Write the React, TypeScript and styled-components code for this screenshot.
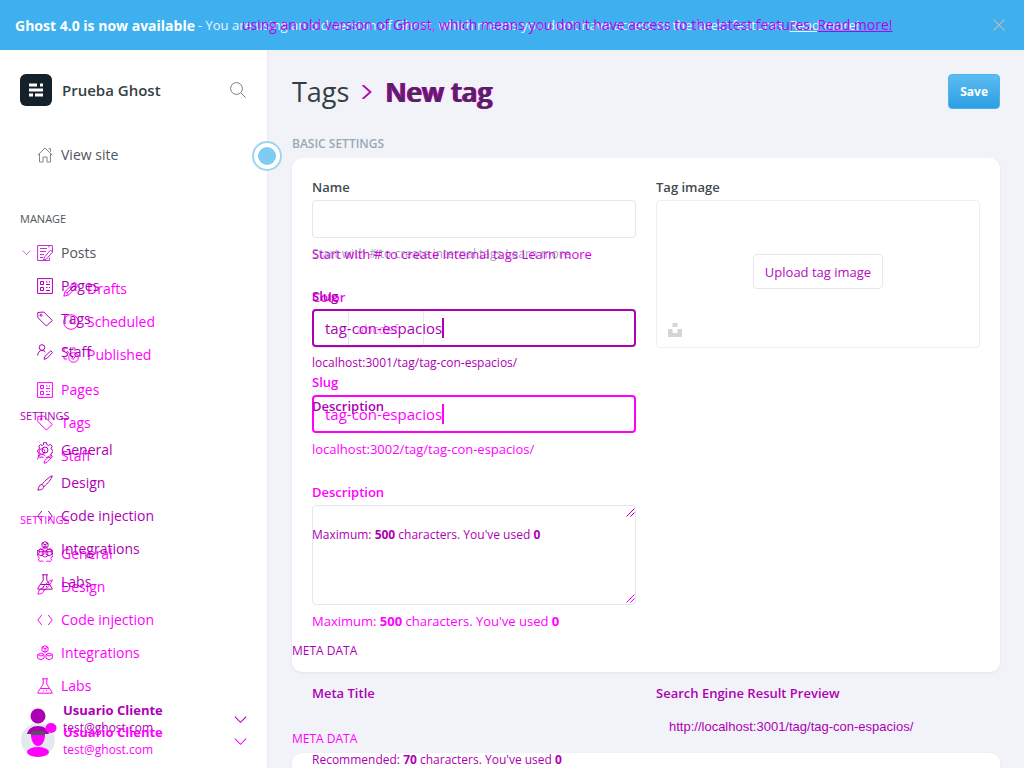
import React from "react";
import styled, { createGlobalStyle, css } from "styled-components";

const ADDED = "#ff00ff";
const REMOVED = "#ad00b4";

const GlobalStyle = createGlobalStyle`
  *, *::before, *::after { box-sizing: border-box; }
  html, body { margin: 0; height: 100%; overflow: hidden; }
  body { font-family: "Open Sans", "Noto Sans", sans-serif; font-size: 14px; color: #4f565d; background: #f2f3f8; }
  button, input, textarea { font: inherit; color: inherit; }
  h1, h2, h3, p, ul { margin: 0; padding: 0; font-weight: 400; }
  ul { list-style: none; }
  a { color: inherit; text-decoration: none; }
`;

const Page = styled.div`
  display: flex;
  flex-direction: column;
  height: 100vh;
`;

/* Two revisions of one region share a single grid cell. */
const Stack = styled.div`
  display: grid;
  grid-template-columns: minmax(0, 1fr);
  align-items: start;
  > * { grid-area: 1 / 1; }
`;

const Banner = styled.div`
  flex: none;
  display: flex;
  align-items: center;
  height: 50px;
  padding: 0 16px 0 15px;
  background: #3eb0ef;
  color: #fff;
  font-size: 13px;
  white-space: nowrap;
  strong { font-size: 14px; font-weight: 700; }
`;
const BannerTexts = styled(Stack)`
  flex: 1;
  align-items: center;
  margin-left: 3px;
`;
const Notice = styled.p<{ $added?: boolean }>`
  color: ${(p) => (p.$added ? "#b800f0" : "#e8f6fd")};
  font-size: ${(p) => (p.$added ? 14 : 13)}px;
  line-height: 18px;
  padding-left: ${(p) => (p.$added ? 44 : 0)}px;
  a { text-decoration: underline; }
`;
const CloseButton = styled.button`
  display: flex;
  padding: 0;
  border: 0;
  background: none;
  color: #c9b9b4;
`;

const Body = styled.div`
  flex: 1;
  min-height: 0;
  display: flex;
`;

const Sidebar = styled.aside`
  position: relative;
  flex: none;
  display: flex;
  flex-direction: column;
  width: 268px;
  background: #fff;
  border-right: 1px solid #e9edf1;
`;
const SiteHeader = styled.div`
  display: flex;
  align-items: center;
  gap: 10px;
  padding: 24px 21px 0 20px;
  color: #343f44;
  h2 { flex: 1; font-size: 15px; font-weight: 600; }
`;
const PlainButton = styled.button`
  display: flex;
  padding: 0;
  border: 0;
  background: none;
  color: #6a737b;
`;
const Nav = styled.nav`
  flex: 1;
  min-height: 0;
  padding-top: 32px;
`;
const Row = styled.a<{ $sub?: boolean }>`
  display: flex;
  align-items: center;
  gap: 8px;
  height: 33px;
  padding-left: ${(p) => (p.$sub ? 63 : 37)}px;
`;
const SiteRow = styled(Row)`
  svg { color: #7d868d; }
`;
const PostsRow = styled(Row)`
  gap: 0;
  padding-left: 22px;
  svg { color: #c42fd0; }
  svg:first-child { margin-right: 6px; }
  svg + svg { margin-right: 8px; }
`;
const NavHeading = styled.h3`
  margin: 39px 0 8px;
  padding-left: 20px;
  font-size: 11px;
  line-height: 18px;
  font-weight: 500;
`;
const SubList = styled.ul`
  padding: 3px 0 2px;
`;
const Revision = styled.div<{ $tone: string }>`
  color: ${(p) => p.$tone};
`;
const Toggle = styled.button`
  position: absolute;
  top: 91px;
  right: -15px;
  width: 30px;
  height: 30px;
  padding: 4px;
  border: 2px solid #9ed5f2;
  border-radius: 50%;
  background: #fff;
  &::before {
    content: "";
    display: block;
    width: 18px;
    height: 18px;
    border-radius: 50%;
    background: #80cbf1;
  }
`;
const Account = styled.footer`
  flex: none;
  display: grid;
  grid-template-columns: 36px minmax(0, 1fr);
  gap: 6px;
  padding: 0 20px 9px 21px;
`;
const User = styled.div<{ $tone: string; $lower?: boolean }>`
  display: flex;
  align-items: center;
  justify-content: space-between;
  color: ${(p) => p.$tone};
  ${(p) => p.$lower && css`padding-top: 22px;`}
  line-height: 18px;
  strong { display: block; font-size: 13px; font-weight: 700; }
  span { font-size: 12px; display: block; }
`;

const Main = styled.main`
  flex: 1;
  min-width: 0;
  padding: 24px 24px 0;
  overflow: hidden;
`;
const TitleBar = styled.header`
  display: flex;
  align-items: center;
  justify-content: space-between;
  height: 35px;
`;
const Title = styled.h1`
  display: flex;
  align-items: center;
  gap: 11px;
  font-size: 27px;
  line-height: 35px;
  font-weight: 500;
  color: #343f44;
`;
const TitleText = styled.span`
  font-weight: 600;
  color: #4a2a55;
  text-shadow: 1px 0 #d400dc, -1px 0 ${REMOVED};
`;
const SaveButton = styled.button`
  height: 35px;
  padding: 0 11px;
  border: 1px solid #4fb2ea;
  border-radius: 4px;
  background: linear-gradient(#5cbcf1, #2b9fe3);
  color: #fff;
  font-size: 12px;
  font-weight: 700;
`;
const SectionTitle = styled.h2<{ $tone?: string }>`
  font-size: 12px;
  line-height: 18px;
  font-weight: ${(p) => (p.$tone ? 400 : 600)};
  color: ${(p) => p.$tone || "#98a9b6"};
`;
const Revisions = styled(Stack)`
  padding-top: 26px;
`;
const Card = styled.section<{ $tall?: boolean }>`
  margin-top: 5px;
  padding: 20px;
  border-radius: 10px;
  background: #fff;
  box-shadow: 0 1px 3px rgba(40, 60, 90, 0.08);
  ${(p) => p.$tall && css`padding-bottom: 17px; margin-bottom: 58px;`}
`;
const Columns = styled.div`
  display: grid;
  grid-template-columns: minmax(0, 1fr) minmax(0, 1fr);
  gap: 20px;
`;
const Field = styled.div`
  display: flex;
  flex-direction: column;
  margin-bottom: 25px;
`;
const Label = styled.label<{ $tone?: string }>`
  margin-bottom: 4px;
  font-size: 13px;
  line-height: 18px;
  font-weight: 600;
  color: ${(p) => p.$tone || "#3f4a50"};
`;
const boxed = css`
  border: 1px solid #e3e8eb;
  border-radius: 4px;
  background: transparent;
  outline: 0;
`;
const TextInput = styled.input<{ $bare?: boolean }>`
  ${boxed}
  height: 38px;
  width: 100%;
  ${(p) => p.$bare && css`border-color: transparent;`}
`;
const FocusBox = styled.div<{ $tone: string }>`
  display: flex;
  align-items: center;
  height: 38px;
  padding-left: 11px;
  border: 2px solid ${(p) => p.$tone};
  border-radius: 4px;
  color: ${(p) => p.$tone};
  font-size: 15px;
  input {
    field-sizing: content;
    padding: 0;
    border: 0;
    outline: 0;
    background: none;
  }
  &::after {
    content: "";
    width: 2px;
    height: 20px;
    background: ${(p) => p.$tone};
  }
`;
const ColorBox = styled.div`
  display: flex;
  height: 38px;
  width: 112px;
  ${boxed}
  &::before {
    content: "";
    width: 36px;
    border-right: 1px solid #e3e8eb;
  }
  input {
    width: 70px;
    padding: 0 8px;
    border: 0;
    background: none;
    font-size: 13px;
  }
  input::placeholder { color: ${ADDED}; opacity: 0.5; }
`;
const Help = styled.p<{ $tone: string; $large?: boolean }>`
  margin-top: 7px;
  font-size: ${(p) => (p.$large ? 13 : 12)}px;
  line-height: 18px;
  color: ${(p) => p.$tone};
  white-space: nowrap;
  strong { font-weight: 700; }
`;
const AreaWrap = styled.div<{ $tone: string }>`
  position: relative;
  height: 100px;
  svg { position: absolute; right: 1px; bottom: 2px; color: ${(p) => p.$tone}; }
`;
const Area = styled.textarea<{ $bare?: boolean }>`
  ${boxed}
  display: block;
  width: 100%;
  height: 100px;
  resize: none;
  ${(p) => p.$bare && css`border-color: transparent;`}
`;
const Uploader = styled.div`
  ${boxed}
  display: flex;
  align-items: center;
  justify-content: center;
  position: relative;
  height: 148px;
  padding-bottom: 5px;
  border-color: #eceff1;
  > svg { position: absolute; left: 11px; bottom: 10px; }
`;
const UploadButton = styled.button`
  ${boxed}
  height: 35px;
  padding: 0 11px;
  color: #b40cbc;
  font-size: 13px;
`;
const RemovedForm = styled.div`
  padding: 152px 20px 0;
`;
const MetaHeading = styled.div`
  margin: 73px 0 24px -20px;
`;
const Snippet = styled.a`
  padding: 12px 0 0 13px;
  font-family: "Liberation Sans", Arial, sans-serif;
  font-size: 13px;
  line-height: 18px;
  color: ${REMOVED};
`;

const Svg = ({ size = 16, sw = 1, children }: { size?: number; sw?: number; children: React.ReactNode }) => (
  <svg width={size} height={size} viewBox="0 0 16 16" fill="none" stroke="currentColor" strokeWidth={sw} aria-hidden="true">
    {children}
  </svg>
);

const icons: Record<string, React.ReactNode> = {
  home: <path d="M.7 8.2 8 1l7.300 7.200M2.500 6.500v8.500h3.500v-5h4v5h3.500v-8.500M11.500 1.700h2v3" />,
  posts: <path d="M12 2.500v-2H.6v15h11.800v-3M3 3.500h7M3 6.500h6M3 9.500h4M3 12.500h3M12 .5h3.400v3M15.500 3v4l-6 7-3 1 1-3 6-7 2 2" />,
  pages: <path d="M.6.6h14.800v14.800H.6zM3.500 3.500h3v3h-3zM3.500 9.500h3v3h-3zM9 4h1.500M12 4h1M9 6.500h4M9 9.500h1.500M12 9.500h1M9 12.500h4" />,
  tag: <><path d="M.8 1.500v5l8.500 8.500 6-5.500-8.500-8.500z" /><circle cx="4" cy="4.200" r="1" /></>,
  staff: <><circle cx="5" cy="3.500" r="2.800" /><path d="M.6 11.500c.3-3.300 2-5 4.400-5 1.500 0 2.700.6 3.500 1.800M7 15.300l1-3 5.800-5.500 1.700 1.800-5.600 5.800z" /></>,
  gear: <><circle cx="8" cy="8" r="3" /><path d="m6.500.7 3 0 .5 2 1.500.7 1.900-1 1.700 2-1 1.800.6 1.500 1.300.6v2l-1.500.6-.6 1.500.7 1.700-1.700 1.600-1.800-.8-1.500.7-.6 1.700h-2l-.8-1.800-1.500-.6-2 .7-1.400-1.700.9-1.700-.6-1.400-.9-.6v-2l1.200-.7.7-1.500-.8-1.800 1.600-1.600 1.700.8 1.500-.7z" /></>,
  brush: <path d="M.7 15c1.300-1 .6-4.800 3.300-5.300 2.500-.3 3.400 2.300 1.800 4-1.200 1.200-3.300 1.300-5.100 1.300zM5 9.500C8 5.500 12 2 15.300.8c-.6 3-4.800 8-8.500 10.900" />,
  code: <path d="M4.800 3 .8 8l4 5M11.200 3l4 5-4 5" />,
  blocks: <path d="M8 .7l3 1.500v3.500L8 7.300 5 5.700V2.200zM5 2.200l3 1.500 3-1.500M8 3.700v3.600M4 8l3 1.500v3.700L4 14.900l-3.300-1.700V9.500zM.7 9.500 4 11l3-1.500M12 8l3.300 1.500v3.700L12 14.900l-3-1.700V9.500zM9 9.500l3 1.500 3.300-1.500" />,
  labs: <path d="M5 .8h6M6.200.8v5.400L.9 14.200v1h14.200v-1L9.800 6.200V.8M3.800 10.500h8.400M6 13h1M9 12.500h1" />,
  pen: <path d="m.8 15.200 1.300-4.700L11.500 1l3.500 3.500-9.400 9.400zM9.500 3l3.500 3.500M2.100 10.500l3.500 3.400M4 12l7-7" />,
  clock: <><circle cx="8" cy="8" r="7.300" /><path d="M8 3.500V8l3.500 2.500" /></>,
  published: <><path d="M1 5V1h4M9 1h3v3M1 9v3h3M4 4l6 7" /><circle cx="10.500" cy="10.500" r="4.800" /><path d="m8 10.500 2 2 3-4" /></>,
};
const Icon = ({ name }: { name: string }) => <Svg>{icons[name]}</Svg>;
const Chevron = ({ size = 12 }: { size?: number }) => (
  <Svg size={size} sw={1.3}><path d="m1 4.500 7 7 7-7" /></Svg>
);
const Grip = () => (
  <svg width="9" height="9" viewBox="0 0 9 9" stroke="currentColor" fill="none" aria-hidden="true"><path d="M.5 8.500l8-8M4.500 8.500l4-4" /></svg>
);

const manage: [string, string][] = [["pages", "Pages"], ["tag", "Tags"], ["staff", "Staff"]];
const settings: [string, string][] = [["gear", "General"], ["brush", "Design"], ["code", "Code injection"], ["blocks", "Integrations"], ["labs", "Labs"]];
const drafts: [string, string][] = [["pen", "Drafts"], ["clock", "Scheduled"], ["published", "Published"]];

const Links = ({ items, sub }: { items: [string, string][]; sub?: boolean }) => (
  <>
    {items.map(([icon, text]) => (
      <li key={text}><Row href="#" $sub={sub}><Icon name={icon} />{text}</Row></li>
    ))}
  </>
);

const MenuRevision = ({ tone, expanded }: { tone: string; expanded?: boolean }) => (
  <Revision $tone={tone}>
    {expanded && <SubList><Links items={drafts} sub /></SubList>}
    <ul><Links items={manage} /></ul>
    <NavHeading>SETTINGS</NavHeading>
    <ul><Links items={settings} /></ul>
  </Revision>
);

const noticeText = "using an old version of Ghost, which means you don't have access to the latest features. ";

const UserBlock = ({ tone, lower }: { tone: string; lower?: boolean }) => (
  <User $tone={tone} $lower={lower}>
    <div><strong>Usuario Cliente</strong><span>test@ghost.com</span></div>
    <Chevron size={13} />
  </User>
);

const SlugField = ({ id, tone, port, large }: { id: string; tone: string; port: string; large?: boolean }) => (
  <Field>
    <Label htmlFor={id} $tone={tone}>Slug</Label>
    <FocusBox $tone={tone}><input id={id} defaultValue="tag-con-espacios" /></FocusBox>
    <Help $tone={tone} $large={large}>localhost:{port}/tag/tag-con-espacios/</Help>
  </Field>
);

const DescriptionField = ({ id, tone, large }: { id: string; tone: string; large?: boolean }) => (
  <Field>
    <Label htmlFor={id} $tone={tone}>Description</Label>
    <AreaWrap $tone={tone}><Area id={id} $bare={!large} /><Grip /></AreaWrap>
    <Help $tone={tone} $large={large}>Maximum: <strong>500</strong> characters. You've used <strong>0</strong></Help>
  </Field>
);

export default function App() {
  return (
    <Page>
      <GlobalStyle />
      <Banner>
        <strong>Ghost 4.0 is now available</strong>
        <BannerTexts>
          <Notice>- You are {noticeText}<a href="#">Read more!</a></Notice>
          <Notice $added>{noticeText}<a href="#">Read more!</a></Notice>
        </BannerTexts>
        <CloseButton aria-label="Close"><Svg size={18} sw={0.9}><path d="M3 3l10 10M13 3 3 13" /></Svg></CloseButton>
      </Banner>
      <Body>
        <Sidebar>
          <SiteHeader>
            <svg width="32" height="32" viewBox="0 0 32 32" aria-hidden="true">
              <rect width="32" height="32" rx="6" fill="#15212a" />
              <path d="M9 9.500h8v3H9zM20 9.500h3v3h-3zM9 14.500h14v3H9zM9 19.500h4v3H9zM15 19.500h8v3h-8z" fill="#fff" />
            </svg>
            <h2>Prueba Ghost</h2>
            <PlainButton aria-label="Search"><Svg size={16} sw={0.9}><circle cx="6.500" cy="6.500" r="5.900" /><path d="m11 11 4.600 4.600" /></Svg></PlainButton>
          </SiteHeader>
          <Nav>
            <SiteRow href="#"><Icon name="home" />View site</SiteRow>
            <NavHeading>MANAGE</NavHeading>
            <PostsRow href="#"><Chevron size={9} /><Icon name="posts" />Posts</PostsRow>
            <Stack>
              <MenuRevision tone={ADDED} expanded />
              <MenuRevision tone={REMOVED} />
            </Stack>
          </Nav>
          <Account>
            <svg width="36" height="58" viewBox="0 0 36 58" aria-hidden="true">
              <circle cx="17" cy="39" r="17" fill="#e3eaee" />
              <ellipse cx="17" cy="15" rx="7.500" ry="7.500" fill={REMOVED} />
              <path d="M6 33c1-5 5-8 11-8s10 3 11 8z" fill={REMOVED} />
              <path d="M10 32c1-3 13-3 14 0v3H10z" fill="#53575c" />
              <path d="M10 34h14c0 6-3 11-7 11s-7-5-7-11z" fill={ADDED} />
              <ellipse cx="17" cy="51" rx="11" ry="5" fill={ADDED} />
              <ellipse cx="30" cy="27" rx="5.500" ry="5" fill={ADDED} />
            </svg>
            <Stack>
              <UserBlock tone={REMOVED} />
              <UserBlock tone={ADDED} lower />
            </Stack>
          </Account>
          <Toggle aria-label="Toggle menu" />
        </Sidebar>
        <Main>
          <TitleBar>
            <Title>
              <a href="#">Tags</a>
              <Svg size={14} sw={2}><path d="m3 0 9 8-9 8" stroke={REMOVED} /></Svg>
              <TitleText>New tag</TitleText>
            </Title>
            <SaveButton>Save</SaveButton>
          </TitleBar>
          <Revisions>
            <div>
              <SectionTitle>BASIC SETTINGS</SectionTitle>
              <Card $tall>
                <Columns>
                  <div>
                    <Field>
                      <Label htmlFor="name">Name</Label>
                      <TextInput id="name" />
                      <Stack>
                        <Help $tone="#98a9b6">Start with # to create internal tags Learn more</Help>
                        <Help $tone="#d400dc" $large>Start with # to create internal tags Learn more</Help>
                      </Stack>
                    </Field>
                    <Field>
                      <Label htmlFor="color" $tone={ADDED}>Color</Label>
                      <ColorBox><input id="color" placeholder="abcdef" /></ColorBox>
                    </Field>
                    <SlugField id="slug-added" tone={ADDED} port="3002" large />
                    <DescriptionField id="description-added" tone={ADDED} large />
                  </div>
                  <Field>
                    <Label as="span">Tag image</Label>
                    <Uploader>
                      <UploadButton>Upload tag image</UploadButton>
                      <svg width="14" height="14" viewBox="0 0 14 14" fill="#d3d5d6" aria-hidden="true"><path d="M4.500 0h5v4h-5zM0 6h4.500v4h5V6H14v8H0z" /></svg>
                    </Uploader>
                  </Field>
                </Columns>
              </Card>
              <SectionTitle $tone={ADDED}>META DATA</SectionTitle>
              <Card />
            </div>
            <RemovedForm>
              <Columns>
                <div>
                  <SlugField id="slug-removed" tone={REMOVED} port="3001" />
                  <DescriptionField id="description-removed" tone={REMOVED} />
                </div>
              </Columns>
              <MetaHeading><SectionTitle $tone={REMOVED}>META DATA</SectionTitle></MetaHeading>
              <Columns>
                <Field>
                  <Label htmlFor="meta-title" $tone={REMOVED}>Meta Title</Label>
                  <TextInput id="meta-title" $bare />
                  <Help $tone={REMOVED}>Recommended: <strong>70</strong> characters. You've used <strong>0</strong></Help>
                </Field>
                <Field>
                  <Label as="span" $tone={REMOVED}>Search Engine Result Preview</Label>
                  <Snippet href="#">http://localhost:3001/tag/tag-con-espacios/</Snippet>
                </Field>
              </Columns>
            </RemovedForm>
          </Revisions>
        </Main>
      </Body>
    </Page>
  );
}
